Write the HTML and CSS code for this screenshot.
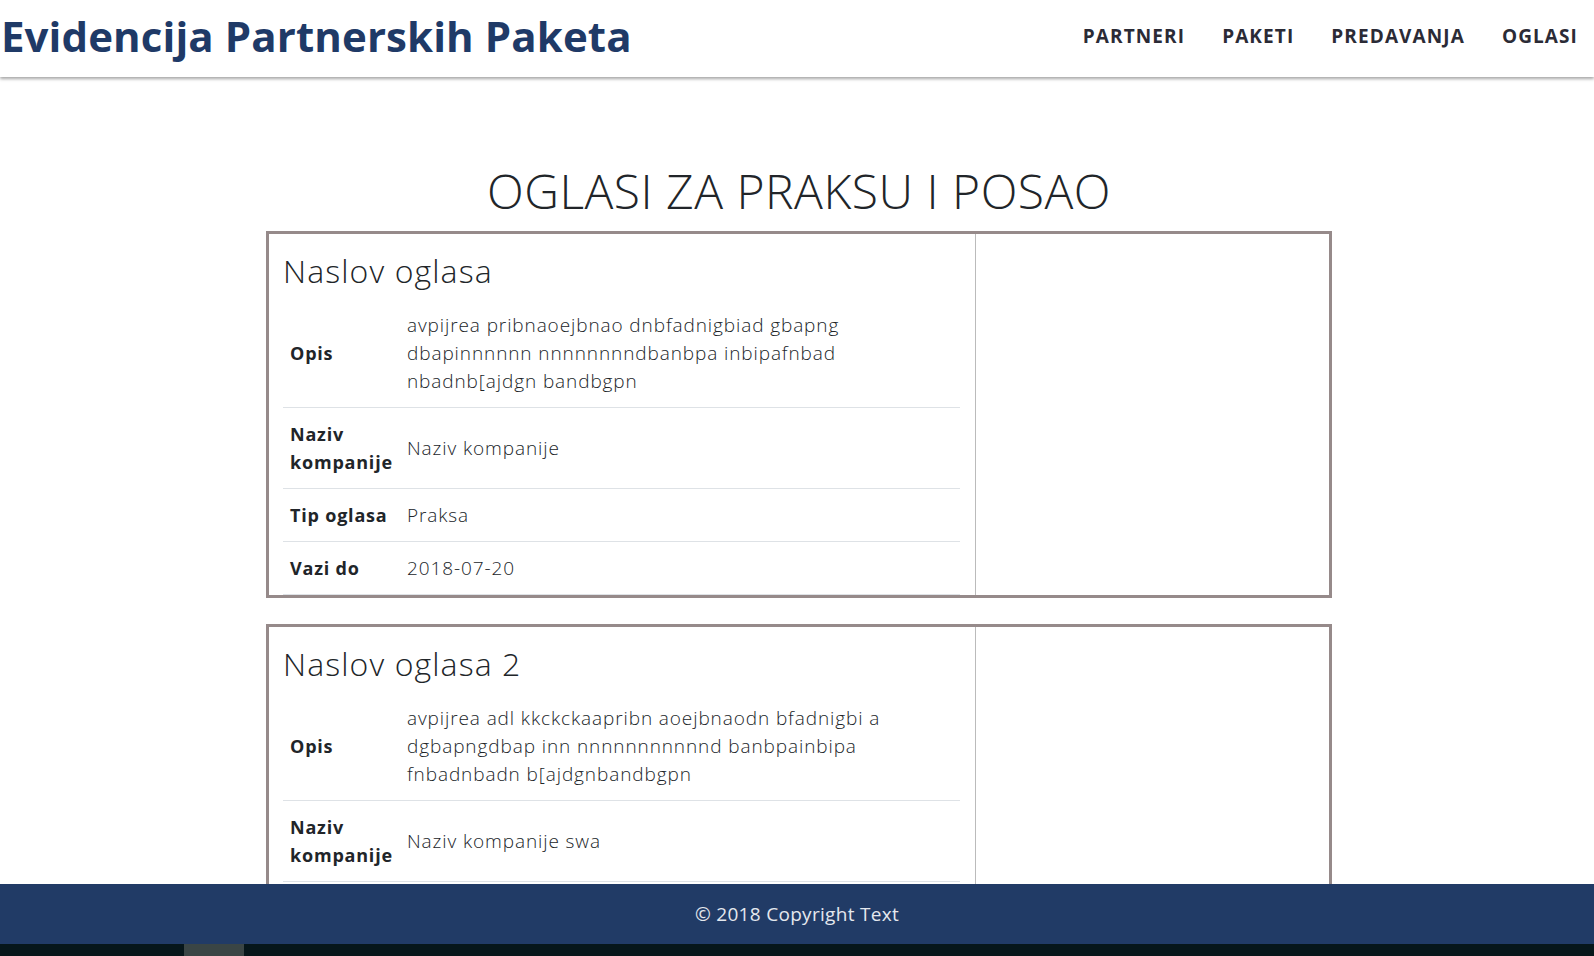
FILE: index.html
```html
<!DOCTYPE html>
<html lang="sr">
<head>
    <meta charset="UTF-8">
    <meta name="viewport" content="width=device-width, initial-scale=1.0">
    <title>Evidencija Partnerskih Paketa</title>
    <link rel="stylesheet" href="styles.css">
</head>
<body>
    <header class="navbar">
        <a class="brand" href="#">Evidencija Partnerskih Paketa</a>
        <nav class="nav-links">
            <a href="#">PARTNERI</a>
            <a href="#">PAKETI</a>
            <a href="#">PREDAVANJA</a>
            <a href="#">OGLASI</a>
        </nav>
    </header>

    <main class="container">
        <h1 class="page-title">OGLASI ZA PRAKSU I POSAO</h1>

        <div class="oglas">
            <div class="oglas-info">
                <h3>Naslov oglasa</h3>
                <table class="oglas-table">
                    <tr>
                        <th>Opis</th>
                        <td>avpijrea pribnaoejbnao dnbfadnigbiad gbapng dbapinnnnnn nnnnnnnndbanbpa inbipafnbad nbadnb[ajdgn bandbgpn</td>
                    </tr>
                    <tr>
                        <th>Naziv kompanije</th>
                        <td>Naziv kompanije</td>
                    </tr>
                    <tr>
                        <th>Tip oglasa</th>
                        <td>Praksa</td>
                    </tr>
                    <tr>
                        <th>Vazi do</th>
                        <td>2018-07-20</td>
                    </tr>
                </table>
            </div>
            <div class="oglas-side"></div>
        </div>

        <div class="oglas">
            <div class="oglas-info">
                <h3>Naslov oglasa 2</h3>
                <table class="oglas-table">
                    <tr>
                        <th>Opis</th>
                        <td>avpijrea adl kkckckaapribn aoejbnaodn bfadnigbi a dgbapngdbap inn nnnnnnnnnnnd banbpainbipa fnbadnbadn b[ajdgnbandbgpn</td>
                    </tr>
                    <tr>
                        <th>Naziv kompanije</th>
                        <td>Naziv kompanije swa</td>
                    </tr>
                    <tr>
                        <th>Tip oglasa</th>
                        <td>Posao</td>
                    </tr>
                    <tr>
                        <th>Vazi do</th>
                        <td>2018-08-01</td>
                    </tr>
                </table>
            </div>
            <div class="oglas-side"></div>
        </div>
    </main>

    <footer class="footer">&copy; 2018 Copyright Text</footer>
    <div class="taskbar"><span class="task-item"></span></div>
</body>
</html>
```

FILE: styles.css
```css
body {
    margin: 0;
    font-family: "Open Sans", "DejaVu Sans", sans-serif;
    color: #212529;
    background-color: #fff;
    padding-bottom: 80px;
}
a {
    text-decoration: none;
}
.navbar {
    display: flex;
    justify-content: space-between;
    align-items: center;
    height: 77px;
    padding: 0 16px 0 1px;
    box-shadow: 0 2px 3px rgba(0, 0, 0, 0.35);
}
.brand {
    color: #1f3a67;
    font-size: 42px;
    font-weight: 700;
    letter-spacing: 0.1px;
    margin-top: -7px;
}
.nav-links {
    display: flex;
    gap: 37px;
    margin-top: -5px;
}
.nav-links a {
    color: #2b2b36;
    font-size: 19px;
    font-weight: 700;
    letter-spacing: 1.1px;
}
.container {
    width: 1066px;
    margin: 0 auto;
    padding-left: 4px;
}
.page-title {
    margin: 85px 0 11px;
    text-align: center;
    font-size: 48px;
    font-weight: 300;
    line-height: 1.2;
    color: #212529;
    letter-spacing: 0.5px;
}
.oglas {
    display: grid;
    grid-template-columns: 2fr 1fr;
    border: 3px solid #968a8a;
    margin-bottom: 26px;
}
.oglas-info {
    padding: 18px 15px 0 14px;
    border-right: 1px solid #bbb;
}
.oglas-info h3 {
    margin: 0 0 9px;
    font-size: 32px;
    font-weight: 300;
    line-height: 1.2;
    letter-spacing: 1.1px;
}
.oglas-table {
    width: 100%;
    border-collapse: collapse;
    font-size: 19px;
    line-height: 28px;
}
.oglas-table tr {
    border-bottom: 1px solid #dee2e6;
}
.oglas-table th,
.oglas-table td {
    padding: 12px 7px;
    vertical-align: middle;
    text-align: left;
}
.oglas-table th {
    width: 103px;
    font-size: 18px;
    font-weight: 700;
    letter-spacing: 0.8px;
}
.oglas-table td {
    font-weight: 300;
    letter-spacing: 0.9px;
}
.footer {
    position: fixed;
    left: 0;
    right: 0;
    bottom: 12px;
    height: 60px;
    display: flex;
    align-items: center;
    justify-content: center;
    background-color: #213b66;
    color: #e4e8ee;
    font-size: 19px;
    letter-spacing: 0.3px;
}
.taskbar {
    position: fixed;
    left: 0;
    right: 0;
    bottom: 0;
    height: 12px;
    background-color: #06161a;
}
.task-item {
    display: block;
    margin-left: 184px;
    width: 60px;
    height: 12px;
    background-color: #3a4545;
}
```
